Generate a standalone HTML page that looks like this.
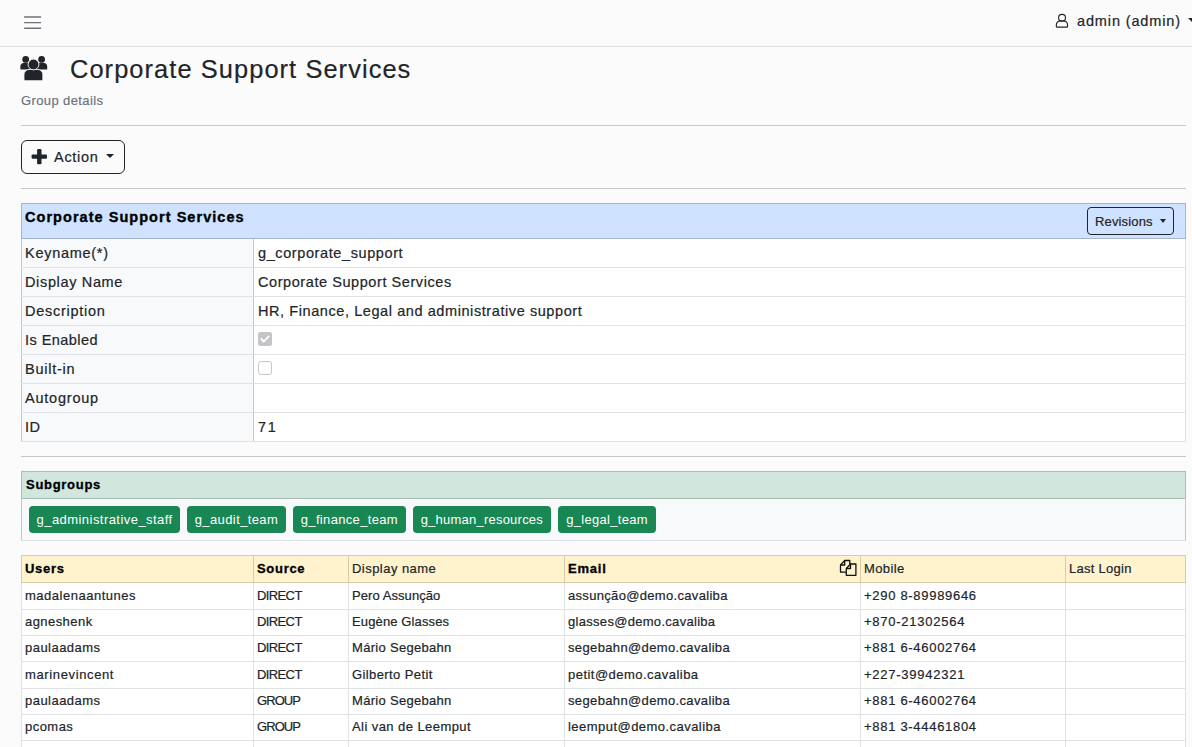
<!DOCTYPE html>
<html><head><meta charset="utf-8">
<style>
*{box-sizing:border-box;margin:0;padding:0}
html,body{width:1192px;height:747px;overflow:hidden}
body{background:#fbfbfb;font-family:"Liberation Sans",sans-serif;color:#212529;font-size:14.5px;letter-spacing:.55px;position:relative;-webkit-text-stroke-width:.2px}
.abs{position:absolute}
.bs{-webkit-text-stroke:.35px #000}
.t{position:absolute;white-space:nowrap;line-height:20px}
.nav{position:absolute;left:0;top:0;width:1192px;height:47px;border-bottom:1px solid #dee2e6;background:#fbfbfb}
.hr{position:absolute;left:21px;width:1165px;height:1px;background:#c6c7c8}
.btn{position:absolute;border:1px solid #212529;border-radius:6px}
.caret{position:absolute;width:0;height:0;border-left:4px solid transparent;border-right:4px solid transparent;border-top:4.5px solid #212529}
table{border-collapse:collapse;position:absolute;left:21px;width:1165px;table-layout:fixed}
td,th{border:1px solid #dee2e6;padding:0 3px;white-space:nowrap;overflow:hidden;text-align:left;vertical-align:middle}
.dt td{height:29px;font-size:14.5px;padding-left:3px}
.dt td.k{background:#f8f9fa;border-left-color:#c6c7c9;border-right-color:#c6c7c9}
.dt td.v{background:#fff;padding-left:4px}
.dt th{position:relative;height:35px;background:#cfe2ff;color:#000;-webkit-text-stroke:.35px #000;border-color:#a6b5cc;font-weight:bold;letter-spacing:1px;vertical-align:top;padding-top:5px}
.ut{font-size:13px;letter-spacing:.5px}
.ut td{height:26.3px;background:#fff;padding-bottom:1.5px}
.ut th{padding-bottom:1.5px;height:27.4px;background:#fff3cd;color:#000;-webkit-text-stroke:.3px #000;border-color:#d9cba5;font-weight:bold;letter-spacing:.9px}
.ut td.ph{letter-spacing:.97px}
.ut td.up{letter-spacing:-.1px}
.ut th.n{font-weight:normal;letter-spacing:.5px;-webkit-text-stroke:.2px #212529;color:#212529}
.card{position:absolute;left:21px;top:471px;width:1165px;height:70px;border:1px solid #dee2e6;border-left-color:#c6c7c9;border-right-color:#c6c7c9;background:#f8f9fa}
.card .hd{-webkit-text-stroke:.3px #000;position:absolute;left:-1px;top:-1px;width:1165px;height:28px;background:#d1e7dd;color:#000;border:1px solid #a8bfb4;font-weight:bold;font-size:13px;letter-spacing:.9px;padding:5px 0 0 4px;line-height:16px}
.badge{-webkit-text-stroke-width:0;position:absolute;top:34px;height:27px;background:#198754;color:#fff;border-radius:4px;font-size:13px;letter-spacing:.5px;line-height:28px;text-align:center;white-space:nowrap}
</style></head><body>
<div class="nav">
  <svg class="abs" style="left:22px;top:12px" width="22" height="22" viewBox="0 0 22 22">
    <path d="M2.6 5h16M2.6 10.6h16M2.6 16.2h16" stroke="#6f7378" stroke-width="1.4" stroke-linecap="round" fill="none"></path>
  </svg>
  <svg class="abs" style="left:1054px;top:12px" width="16" height="18" viewBox="0 0 16 18">
    <circle cx="8.05" cy="5.8" r="3.45" stroke="#212529" stroke-width="1.15" fill="none"></circle>
    <path d="M2.35 14.6V12.9C2.35 10.6 4.2 8.8 6.5 8.8H9.4C11.7 8.8 13.55 10.6 13.55 12.9V14.6Q13.55 15.05 13.1 15.05H2.8Q2.35 15.05 2.35 14.6Z" stroke="#212529" stroke-width="1.15" fill="none" stroke-linejoin="round"></path>
  </svg>
  <div class="t" style="left: 1077px; top: 11px; font-size: 14.5px; letter-spacing: 0.87px;">admin (admin)</div>
  <div class="caret" style="left:1188px;top:18px"></div>
</div>

<svg class="abs" style="left:18px;top:52px" width="32" height="32" viewBox="0 0 32 32">
  <circle cx="7.7" cy="7.4" r="3.4" fill="#212529"></circle>
  <circle cx="23.6" cy="7.4" r="3.4" fill="#212529"></circle>
  <path d="M2.4 17.6V14.2c0-1.7 1.4-3.1 3.1-3.1H12v6.5z" fill="#212529"></path>
  <path d="M29.2 17.6V14.2c0-1.7-1.4-3.1-3.1-3.1H19v6.5z" fill="#212529"></path>
  <path d="M5.95 27.1V22.6c0-2.9 2.3-5.15 5.15-5.15h8.6c2.9 0 5.15 2.25 5.15 5.15v4.5c0 .9-.7 1.65-1.65 1.65H7.6c-.9 0-1.65-.75-1.65-1.65z" fill="#212529" stroke="#fbfbfb" stroke-width="0.9"></path>
  <circle cx="15.5" cy="12.45" r="5.4" fill="#212529" stroke="#fbfbfb" stroke-width="0.9"></circle>
</svg>
<div class="t" style="left: 70px; top: 53.5px; font-size: 25.4px; line-height: 30px; letter-spacing: 1.08px;">Corporate Support Services</div>
<div class="t" style="left: 21px; top: 92px; font-size: 13px; color: rgb(108, 117, 125); letter-spacing: 0.39px; line-height: 18px;">Group details</div>
<div class="hr" style="top:125px"></div>

<div class="btn" style="left:21px;top:140px;width:104px;height:34px">
  <svg class="abs" style="left:9px;top:8px" width="16" height="16" viewBox="0 0 16 16">
    <rect x="6.1" y="0" width="4.4" height="15.2" rx="1" fill="#212529"></rect><rect x="0.6" y="5.4" width="15.4" height="4.4" rx="1" fill="#212529"></rect>
  </svg>
  <div class="t" style="left: 32px; top: 6px; font-size: 14.5px; letter-spacing: 0.71px;">Action</div>
  <div class="caret" style="left:84px;top:13px"></div>
</div>
<div class="hr" style="top:188px"></div>

<table class="dt" style="top:203px">
  <colgroup><col style="width:232px"><col></colgroup>
  <tbody><tr><th colspan="2" style="letter-spacing: 1.04px;">Corporate Support Services
    <div class="btn" style="left:1065px;top:3px;width:87px;height:28px;border-color:#212529;border-radius:4px;font-weight:normal;-webkit-text-stroke:.2px #212529;color:#212529;font-size:13px;letter-spacing:.5px"><div class="t" style="left: 7px; top: 5px; line-height: 18px; letter-spacing: 0.15px;">Revisions</div><div class="caret" style="left:72px;top:11px;border-left-width:3.5px;border-right-width:3.5px;border-top-width:4px"></div></div>
  </th></tr>
  <tr><td class="k" style="letter-spacing: 0.72px;">Keyname(*)</td><td class="v" style="letter-spacing: 0.6px;">g_corporate_support</td></tr>
  <tr><td class="k" style="letter-spacing: 0.65px;">Display Name</td><td class="v" style="letter-spacing: 0.57px;">Corporate Support Services</td></tr>
  <tr><td class="k" style="letter-spacing: 0.72px;">Description</td><td class="v" style="letter-spacing: 0.58px;">HR, Finance, Legal and administrative support</td></tr>
  <tr><td class="k" style="letter-spacing: 0.44px;">Is Enabled</td><td class="v"><svg width="14" height="14" viewBox="0 0 14 14" style="display:block;position:relative;top:-1px"><rect x="0" y="0" width="14" height="14" rx="2.5" fill="#c3c5c8"></rect><path d="M3.3 7l2.5 2.5 5-5.2" stroke="#fff" stroke-width="1.8" fill="none" stroke-linecap="round" stroke-linejoin="round"></path></svg></td></tr>
  <tr><td class="k" style="letter-spacing: 0.75px;">Built-in</td><td class="v"><svg width="14" height="14" viewBox="0 0 14 14" style="display:block;position:relative;top:-1px"><rect x=".5" y=".5" width="13" height="13" rx="2.5" fill="#fff" stroke="#c6c7ca"></rect></svg></td></tr>
  <tr><td class="k" style="letter-spacing: 0.78px;">Autogroup</td><td class="v"></td></tr>
  <tr><td class="k" style="letter-spacing: 0.41px;">ID</td><td class="v" style="letter-spacing: 1.69px;">71</td></tr>
</tbody></table>
<div class="hr" style="top:456px"></div>

<div class="card">
  <div class="hd" style="letter-spacing: 0.71px;">Subgroups</div>
  <div class="badge" style="left: 7px; width: 151.2px; letter-spacing: 0.45px;">g_administrative_staff</div>
  <div class="badge" style="left: 165.2px; width: 98.6px; letter-spacing: 0.39px;">g_audit_team</div>
  <div class="badge" style="left: 271.1px; width: 112.6px; letter-spacing: 0.33px;">g_finance_team</div>
  <div class="badge" style="left: 391.1px; width: 137.5px; letter-spacing: 0.23px;">g_human_resources</div>
  <div class="badge" style="left: 536.1px; width: 97.9px; letter-spacing: 0.31px;">g_legal_team</div>
</div>

<table class="ut" style="top:555px">
  <colgroup><col style="width:232px"><col style="width:95px"><col style="width:216px"><col style="width:296px"><col style="width:205px"><col></colgroup>
  <tbody><tr><th style="letter-spacing: 0.69px;">Users</th><th style="letter-spacing: 0.7px;">Source</th><th class="n" style="letter-spacing: 0.46px;">Display name</th><th style="position: relative; letter-spacing: 0.78px;">Email<svg class="abs" style="left:271px;top:0px" width="24" height="24" viewBox="0 0 24 24"><g stroke="#111" stroke-width="1.3" fill="none" stroke-linejoin="round"><path d="M10.3 16.2H4.5V9L8.7 4.5H13.8V8"></path><path d="M4.5 9H8.7V4.5"></path><path d="M14.5 8H19.9V19.3H10.3V12.5L14.5 8Z"></path><path d="M10.3 12.5H14.5V8"></path></g></svg></th><th class="n" style="letter-spacing: 0.38px;">Mobile</th><th class="n" style="letter-spacing: 0.27px;">Last Login</th></tr>
  <tr><td style="letter-spacing: 0.51px;">madalenaantunes</td><td class="up" style="letter-spacing: -0.61px;">DIRECT</td><td style="letter-spacing: 0.07px;">Pero Assunção</td><td style="letter-spacing: 0.32px;">assunção@demo.cavaliba</td><td class="ph" style="letter-spacing: 0.7px;">+290 8-89989646</td><td></td></tr>
  <tr><td style="letter-spacing: 0.44px;">agneshenk</td><td class="up" style="letter-spacing: -0.61px;">DIRECT</td><td style="letter-spacing: 0.13px;">Eugène Glasses</td><td style="letter-spacing: 0.3px;">glasses@demo.cavaliba</td><td class="ph" style="letter-spacing: 0.75px;">+870-21302564</td><td></td></tr>
  <tr><td style="letter-spacing: 0.47px;">paulaadams</td><td class="up" style="letter-spacing: -0.61px;">DIRECT</td><td style="letter-spacing: 0.3px;">Mário Segebahn</td><td style="letter-spacing: 0.36px;">segebahn@demo.cavaliba</td><td class="ph" style="letter-spacing: 0.7px;">+881 6-46002764</td><td></td></tr>
  <tr><td style="letter-spacing: 0.63px;">marinevincent</td><td class="up" style="letter-spacing: -0.61px;">DIRECT</td><td style="letter-spacing: 0.4px;">Gilberto Petit</td><td style="letter-spacing: 0.47px;">petit@demo.cavaliba</td><td class="ph" style="letter-spacing: 0.75px;">+227-39942321</td><td></td></tr>
  <tr><td style="letter-spacing: 0.47px;">paulaadams</td><td class="up" style="letter-spacing: -0.92px;">GROUP</td><td style="letter-spacing: 0.3px;">Mário Segebahn</td><td style="letter-spacing: 0.36px;">segebahn@demo.cavaliba</td><td class="ph" style="letter-spacing: 0.7px;">+881 6-46002764</td><td></td></tr>
  <tr><td style="letter-spacing: 0.46px;">pcomas</td><td class="up" style="letter-spacing: -0.92px;">GROUP</td><td style="letter-spacing: 0.43px;">Ali van de Leemput</td><td style="letter-spacing: 0.46px;">leemput@demo.cavaliba</td><td class="ph" style="letter-spacing: 0.7px;">+881 3-44461804</td><td></td></tr>
  <tr><td>&nbsp;</td><td></td><td></td><td></td><td></td><td></td></tr>
</tbody></table>

</body></html>
